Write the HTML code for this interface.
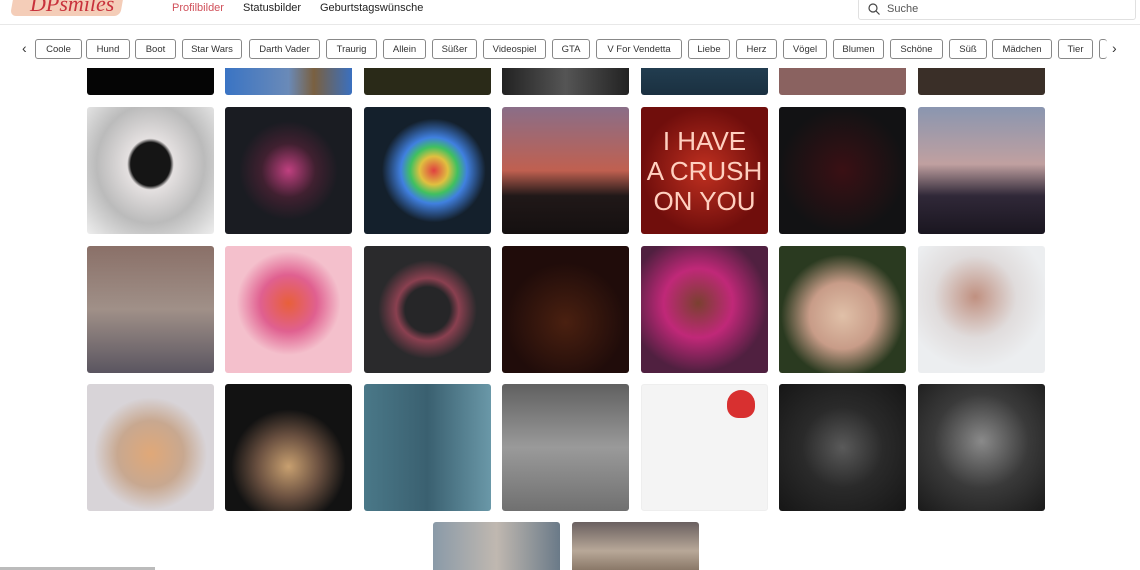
<!DOCTYPE html><html><head><meta charset="utf-8"><style>
*{margin:0;padding:0;box-sizing:border-box}
html,body{width:1140px;height:570px;overflow:hidden}
body{background:#fff;font-family:"Liberation Sans",sans-serif;position:relative}
.hdr{position:absolute;left:0;top:0;width:1140px;height:25px;border-bottom:1px solid #e8e8e8;background:#fff}
.logo{position:absolute;left:12px;top:-6px;width:110px;height:22px;background:#f4cdb8;border-radius:6px;transform:skew(-10deg)}
.logot{position:absolute;left:30px;top:-9px;font:italic 22px "Liberation Serif",serif;color:#c8323c}
.nav{position:absolute;top:2px;font-size:11px;color:#222}
.search{position:absolute;left:858px;top:-2px;width:278px;height:22px;border:1px solid #e0e0e0;border-radius:3px;font-size:11px;color:#555;padding:4px 0 0 28px}
.chip{position:absolute;top:39px;height:20px;border:1px solid #888;border-radius:3px;font-size:9.5px;color:#333;display:flex;align-items:center;justify-content:center;padding-top:1px}
.arr{position:absolute;top:40px;font-size:14px;color:#333}
.t{position:absolute;width:127px;height:127px;border-radius:3px;overflow:hidden;display:flex;align-items:center;justify-content:center}
</style></head><body>
<div class="t" style="left:87px;top:40px;height:55px;background:#050505"></div>
<div class="t" style="left:225px;top:40px;height:55px;background:linear-gradient(90deg,#3a74c4,#6a8ab8 50%,#7a6040 70%,#3a70c0)"></div>
<div class="t" style="left:364px;top:40px;height:55px;background:#2a2a18"></div>
<div class="t" style="left:502px;top:40px;height:55px;background:linear-gradient(90deg,#222,#555 50%,#222)"></div>
<div class="t" style="left:641px;top:40px;height:55px;background:linear-gradient(#2a4a60,#1a3040)"></div>
<div class="t" style="left:779px;top:40px;height:55px;background:#8a6260"></div>
<div class="t" style="left:918px;top:40px;height:55px;background:#3a2f28"></div>
<div class="hdr"><div class="logo"></div><div class="logot">DPsmiles</div>
<div class="nav" style="left:172px;color:#d0505a">Profilbilder</div>
<div class="nav" style="left:243px">Statusbilder</div>
<div class="nav" style="left:320px">Geburtstagswünsche</div>
<div class="search"><svg style="position:absolute;left:9px;top:4px" width="12" height="12" viewBox="0 0 12 12"><circle cx="5" cy="5" r="4" fill="none" stroke="#444" stroke-width="1.2"/><path d="M8 8l3.5 3.5" stroke="#444" stroke-width="1.2"/></svg>Suche</div></div>
<div style="position:absolute;left:0;top:26px;width:1140px;height:42px;background:#fff"></div>
<div class="arr" style="left:22px">‹</div><div class="arr" style="left:1112px">›</div>
<div class="chip" style="left:35px;width:47px">Coole</div>
<div class="chip" style="left:86px;width:44px">Hund</div>
<div class="chip" style="left:135px;width:41px">Boot</div>
<div class="chip" style="left:182px;width:60px">Star Wars</div>
<div class="chip" style="left:249px;width:71px">Darth Vader</div>
<div class="chip" style="left:326px;width:51px">Traurig</div>
<div class="chip" style="left:383px;width:43px">Allein</div>
<div class="chip" style="left:432px;width:45px">Süßer</div>
<div class="chip" style="left:483px;width:63px">Videospiel</div>
<div class="chip" style="left:552px;width:38px">GTA</div>
<div class="chip" style="left:596px;width:86px">V For Vendetta</div>
<div class="chip" style="left:688px;width:42px">Liebe</div>
<div class="chip" style="left:736px;width:41px">Herz</div>
<div class="chip" style="left:783px;width:44px">Vögel</div>
<div class="chip" style="left:833px;width:51px">Blumen</div>
<div class="chip" style="left:890px;width:53px">Schöne</div>
<div class="chip" style="left:949px;width:38px">Süß</div>
<div class="chip" style="left:992px;width:60px">Mädchen</div>
<div class="chip" style="left:1058px;width:35px">Tier</div>
<div class="chip" style="left:1099px;width:8px;border-right:none"></div>

<div class="t" style="left:87px;top:107px;background:radial-gradient(ellipse at 50% 45%,#151515 22%,#e4e0e0 26%,#bbb 60%,#eee)"></div>
<div class="t" style="left:225px;top:107px;background:radial-gradient(circle at 50% 50%,#c04080 0,#402030 30%,#1a1c22 55%)"></div>
<div class="t" style="left:364px;top:107px;background:radial-gradient(circle at 55% 50%,#e04040 0,#e0c040 15%,#40c060 25%,#4080e0 35%,#14202c 55%)"></div>
<div class="t" style="left:502px;top:107px;background:linear-gradient(#8a6e88,#c06050 50%,#201818 70%,#151010)"></div>
<div class="t" style="left:641px;top:107px;background:radial-gradient(#c03020,#700e0c 70%);color:#ffd0c0;font-size:26px;line-height:30px;text-align:center;flex-direction:column">I HAVE<br>A CRUSH<br>ON YOU</div>
<div class="t" style="left:779px;top:107px;background:radial-gradient(#3a1014,#121214 70%)"></div>
<div class="t" style="left:918px;top:107px;background:linear-gradient(#8a96b0,#c0a0a0 45%,#302838 70%,#1a1620)"></div>

<div class="t" style="left:87px;top:246px;background:linear-gradient(#8a7068,#a09088 50%,#5a5560)"></div>
<div class="t" style="left:225px;top:246px;background:radial-gradient(circle at 50% 45%,#e8603a 0,#e06090 30%,#f4c0cc 55%)"></div>
<div class="t" style="left:364px;top:246px;background:radial-gradient(circle at 50% 50%,#262628 25%,#8a4050 35%,#2a2a2c 55%)"></div>
<div class="t" style="left:502px;top:246px;background:radial-gradient(circle at 50% 60%,#4a2010,#200c0a 60%)"></div>
<div class="t" style="left:641px;top:246px;background:radial-gradient(circle at 45% 45%,#7a4030 0,#c02878 35%,#502040 70%)"></div>
<div class="t" style="left:779px;top:246px;background:radial-gradient(circle at 50% 55%,#e0c0a8 0,#c89c88 35%,#2a3a20 65%)"></div>
<div class="t" style="left:918px;top:246px;background:radial-gradient(circle at 45% 40%,#c09080 0,#e0dcdc 40%,#eceef0 70%)"></div>

<div class="t" style="left:87px;top:384px;background:radial-gradient(circle at 50% 55%,#e0a878 0,#c8a890 35%,#d8d4d8 60%)"></div>
<div class="t" style="left:225px;top:384px;background:radial-gradient(circle at 50% 65%,#c8a070 0,#6a5040 30%,#121212 55%)"></div>
<div class="t" style="left:364px;top:384px;background:linear-gradient(90deg,#4a7888,#3a6070 50%,#6a98a8)"></div>
<div class="t" style="left:502px;top:384px;background:linear-gradient(#606060,#9a9a9a 50%,#707070)"></div>
<div class="t" style="left:641px;top:384px;background:#f4f4f4;border:1px solid #eee"><div style="position:absolute;left:85px;top:5px;width:28px;height:28px;background:#d83030;border-radius:50% 50% 40% 40%"></div></div>
<div class="t" style="left:779px;top:384px;background:radial-gradient(circle at 50% 50%,#5a5a5a 0,#2a2a2a 45%,#161616)"></div>
<div class="t" style="left:918px;top:384px;background:radial-gradient(circle at 50% 45%,#8a8a8a 0,#3a3a3a 50%,#1a1a1a)"></div>

<div class="t" style="left:433px;top:522px;height:48px;border-radius:3px 3px 0 0;background:linear-gradient(90deg,#8a9aa8,#c0b8b0 50%,#6a7a88)"></div>
<div class="t" style="left:572px;top:522px;height:48px;border-radius:3px 3px 0 0;background:linear-gradient(#6a6060,#b8a898 60%,#8a7868)"></div>
<div style="position:absolute;left:0;top:567px;width:155px;height:3px;background:#bbb"></div>
</body></html>
